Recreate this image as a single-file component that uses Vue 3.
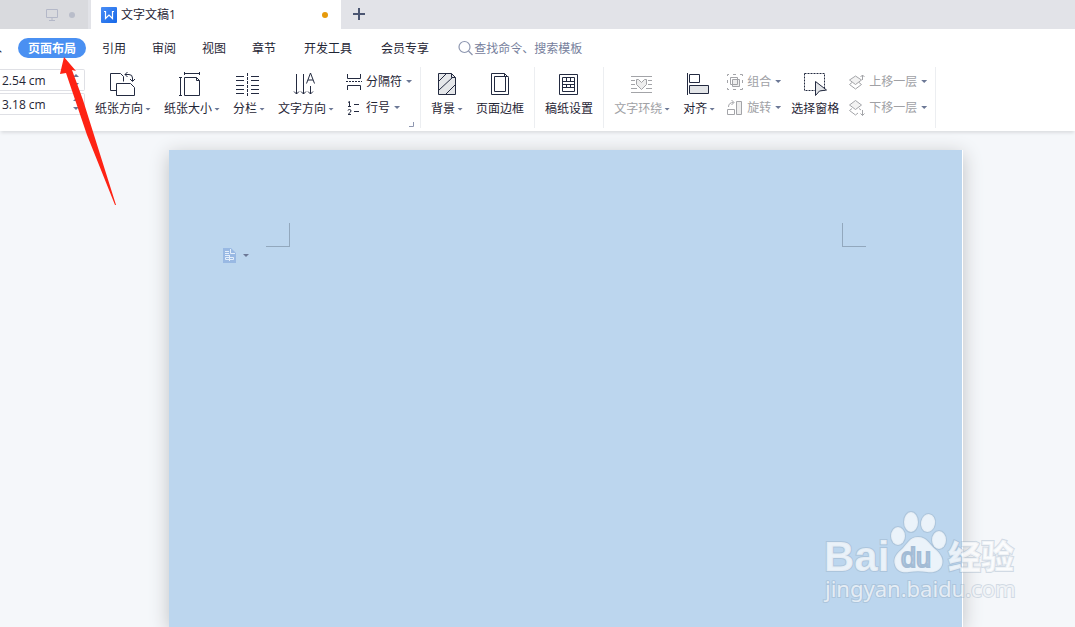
<script setup>
import { ref } from 'vue'

const topMargin = ref('2.54 cm')
const sideMargin = ref('3.18 cm')
const shortMenus = ['引用', '审阅', '视图', '章节']
const longMenus = ['开发工具', '会员专享']
</script>

<template>
  <div class="app">
    <header class="tabs">
      <button class="tab idle" aria-label="其他文档">
        <svg width="12" height="12" viewBox="0 0 12 12" fill="none" stroke="#b4b8c8"><path d="M.500.500h11v8H.500zM6 8.500V11M3 11.500h6" /></svg>
        <i class="dot grey"></i>
      </button>
      <button class="tab active">
        <svg width="16" height="16" viewBox="0 0 16 16"><defs><linearGradient id="brand" x2="1" y2="1"><stop stop-color="#4a8df5" /><stop offset="1" stop-color="#1668e8" /></linearGradient></defs><rect width="16" height="16" rx="1" fill="url(#brand)" /><path d="M3 4.500h1.500v7L8 8l3.500 3.500v-7H13" fill="none" stroke="#fff" stroke-width="1.200" /></svg>
        <span>文字文稿1</span>
        <i class="dot orange"></i>
      </button>
      <button class="add" aria-label="新建">
        <svg width="12" height="12" viewBox="0 0 12 12" stroke="#4b5672" stroke-width="2"><path d="M0 6h12M6 0v12" /></svg>
      </button>
    </header>

    <nav class="menu">
      <button class="clipped">插入</button>
      <button class="pill">页面布局</button>
      <button v-for="m in shortMenus" :key="m" class="item">{{ m }}</button>
      <button v-for="m in longMenus" :key="m" class="item wide">{{ m }}</button>
      <label class="search">
        <svg width="16" height="16" viewBox="0 0 16 16" fill="none" stroke="#8e97b0" stroke-width="1.200"><circle cx="6.500" cy="7" r="5.500" /><path d="M10.500 11l4 4" /></svg>
        <input type="text" placeholder="查找命令、搜索模板" aria-label="查找命令、搜索模板" />
      </label>
    </nav>

    <section class="ribbon">
      <div class="margins">
        <label class="spin"><input v-model="topMargin" type="text" aria-label="上边距" /><span class="steps"><i class="up"></i><i class="caret"></i></span></label>
        <label class="spin"><input v-model="sideMargin" type="text" aria-label="左边距" /><span class="steps"><i class="up"></i><i class="caret"></i></span></label>
      </div>

      <div class="group first">
        <button class="big">
          <svg width="28" height="26" viewBox="0 0 28 26" fill="none" stroke="#232a40"><path d="M7 19.500H1.500v-17h10l3 3v5" /><path d="M7.500 12.500h14l4 4v8h-18z" fill="#fff" /><path d="M16 3.500h4q3.500 0 3.500 3.500v3M18.500 1L16 3.500 18.500 6M21 8l2.500 2.500L26 8" /></svg>
          <span>纸张方向<i class="caret"></i></span>
        </button>
        <button class="big">
          <svg width="28" height="26" viewBox="0 0 28 26" fill="none" stroke="#232a40"><path d="M6.500 6.500h12l3 3v15h-15zM18.500 6.500v3h3" /><path d="M6.500 2.500h15M6.500 1v3M21.500 1v3M2.500 6.500v18M1 6.500h3M1 24.500h3" /></svg>
          <span>纸张大小<i class="caret"></i></span>
        </button>
        <button class="big">
          <svg width="28" height="26" viewBox="0 0 28 26" fill="none" stroke="#232a40"><path d="M1 5.500h8M1 9.500h8M1 14.500h8M1 18.500h8M1 22.500h8M16 5.500h8M16 9.500h8M16 14.500h8M16 18.500h8M16 22.500h8" /><path d="M12.500 2v23" stroke-dasharray="3 1" /></svg>
          <span>分栏<i class="caret"></i></span>
        </button>
        <button class="big">
          <svg width="28" height="26" viewBox="0 0 28 26" fill="none" stroke="#232a40"><path d="M4.500 3v20M2 20.500L4.500 23 7 20.500M11.500 3v20M9 20.500l2.500 2.500 2.500-2.500M18.500 15v8M16 20.500l2.500 2.500 2.500-2.500" /><path d="M14.500 12.500l4-10.500 4 10.500M16 9h5" /></svg>
          <span>文字方向<i class="caret"></i></span>
        </button>
        <div class="stack near">
          <button class="small">
            <svg width="16" height="16" viewBox="0 0 16 16" fill="none" stroke="#232a40"><path d="M1.500 0v4.500h13V0M1.500 16v-4.500h13V16" /><path d="M0 7.500h16" stroke-dasharray="2 1" /></svg>
            <span>分隔符</span><i class="caret"></i>
          </button>
          <button class="small">
            <svg width="16" height="16" viewBox="0 0 16 16" fill="none" stroke="#232a40"><path d="M2 2.500l1.500-1v5M2 6.500h3M2 10.500q0-1 1.500-1T5 11q0 1-3 3.500h3M8 4.500h5M8 11.500h5" /></svg>
            <span>行号</span><i class="caret"></i>
          </button>
        </div>
        <svg class="launcher" width="6" height="6" viewBox="0 0 6 6" fill="none" stroke="#8e97b0"><path d="M0 4.500h4.500V0" /></svg>
      </div>

      <div class="group roomy">
        <button class="big">
          <svg width="28" height="26" viewBox="0 0 28 26" fill="none" stroke="#232a40"><path d="M5.500 2.500h13l4 4v17h-17z" fill="#e5e7ea" /><path d="M18.500 2.500v4h4M6 10l7-7M6 19L20 6M13 23l9-9" /></svg>
          <span>背景<i class="caret"></i></span>
        </button>
        <button class="big">
          <svg width="28" height="26" viewBox="0 0 28 26" fill="none" stroke="#232a40"><path d="M5.500 2.500h13l4 4v17h-17z" /><path d="M8.500 5.500h11v15h-11zM18.500 2.500v3h4" /></svg>
          <span>页面边框</span>
        </button>
      </div>

      <div class="group roomy">
        <button class="big">
          <svg width="28" height="26" viewBox="0 0 28 26" fill="none" stroke="#232a40"><path d="M4.500 3.500h18v20h-18z" /><path d="M7.500 6.500h12v14h-12zM8 10.500h11M8 13.500h11M8 16.500h11M11.500 7v4M15.500 7v4M11.500 13v4M15.500 13v4" /></svg>
          <span>稿纸设置</span>
        </button>
      </div>

      <div class="group">
        <button class="big off" disabled>
          <svg width="28" height="26" viewBox="0 0 28 26" fill="none" stroke="#a3a4a8"><path d="M3 5.500h21M3 9.500h4M20 9.500h4M3 13.500h4M20 13.500h4M3 17.500h6M18 17.500h6M3 21.500h21" /><path d="M8.500 8.500h2l3 3 3-3h2v5l-5 5-5-5z" fill="#eee" /></svg>
          <span>文字环绕<i class="caret"></i></span>
        </button>
        <button class="big">
          <svg width="28" height="26" viewBox="0 0 28 26" fill="none" stroke="#232a40"><path d="M2.500 2v22M4.500 3.500h10v8h-10z" /><path d="M4.500 14.500h19v8h-19z" fill="#e3e5e8" /></svg>
          <span>对齐<i class="caret"></i></span>
        </button>
        <div class="stack near">
          <button class="small off" disabled>
            <svg width="16" height="16" viewBox="0 0 16 16" fill="none" stroke="#a3a4a8"><path d="M3.500 3.500h7v7h-7z" /><path d="M5.500 5.500h7v7h-7z" fill="#eee" /><path d="M5.500 10.500h5v-5" /><path d="M.500 2V.500H2M13 .500h2.500V2M.500 14v1.500H2M13 15.500h2.500V14M6 .500h3M6 15.500h3M.500 6v3M15.500 6v3" /></svg>
            <span>组合</span><i class="caret"></i>
          </button>
          <button class="small off" disabled>
            <svg width="16" height="16" viewBox="0 0 16 16" fill="none" stroke="#a3a4a8"><path d="M9.500 1.500h5v13h-5z" fill="#eee" /><path d="M7.500 9.500h-7v5h7zM1.500 7q0-4.500 5-4.500M4.500 0l2.500 2.500L4.500 5" /></svg>
            <span>旋转</span><i class="caret"></i>
          </button>
        </div>
        <button class="big tight">
          <svg width="28" height="26" viewBox="0 0 28 26" fill="none" stroke="#232a40"><path d="M3.500 2.500h20v17h-20z" stroke-dasharray="2 1" /><path d="M14.500 10.500v14l4-4.500 7-1z" fill="#e3e5e8" /></svg>
          <span>选择窗格</span>
        </button>
        <div class="stack tight">
          <button class="small off" disabled>
            <svg width="16" height="16" viewBox="0 0 16 16" fill="none" stroke="#a3a4a8"><path d="M.500 10.500l6 4.500 6-4.500-2.500-2M.500 10.500l2.500-2" /><path d="M.500 6l6-4 6 4-6 4.500z" fill="#f2f2f2" /><path d="M13.500 6V1M11.500 3l2-2 2 2" /></svg>
            <span>上移一层</span><i class="caret"></i>
          </button>
          <button class="small off" disabled>
            <svg width="16" height="16" viewBox="0 0 16 16" fill="none" stroke="#a3a4a8"><path d="M9 13l-2.500 2-6-4.500 2.500-2M10 8.500l2 1.500" /><path d="M.500 5l6-4.500 6 4.500-6 4.500z" fill="#f2f2f2" /><path d="M13.500 10v5.500M11.500 13.500l2 2 2-2" /></svg>
            <span>下移一层</span><i class="caret"></i>
          </button>
        </div>
      </div>
      <div class="group end"></div>
    </section>

    <main class="canvas">
      <article class="page">
        <div class="crops"><i class="crop left"></i><i class="crop right"></i></div>
        <button class="style-tag" aria-label="页面选项">
          <svg width="13" height="15" viewBox="0 0 13 15" fill="none" stroke="#e4effb"><path d="M0 0h8l5 5v10H0z" fill="#99b9e3" stroke="none" /><path d="M7.500 1v4.500H12M2 3.500h4M2 5.500h4M2 7.500h5M2.500 9.500h8v2h-8zM6.500 8v5" /></svg>
          <i class="caret"></i>
        </button>
      </article>
    </main>

    <svg class="pointer" width="60" height="150" viewBox="0 0 60 150"><path d="M8 0l12 14-4-1 11 30 11 35 22 70h-1L31 78 10 16l-6 1z" fill="#fe2314" /></svg>

    <svg class="watermark" width="200" height="96" viewBox="0 0 200 96">
      <g fill="#fff" fill-opacity=".7" stroke="#8fa5bb" stroke-opacity=".35" stroke-width="2" paint-order="stroke">
        <text class="logo" x="2" y="60">Bai</text>
        <ellipse cx="76" cy="25" rx="7" ry="9" />
        <ellipse cx="89" cy="11" rx="7" ry="10" />
        <ellipse cx="106" cy="12" rx="7" ry="9" transform="rotate(10 106 12)" />
        <ellipse cx="117" cy="29" rx="7" ry="9" />
        <path d="M96 26C87 26 85 34 79 39c-5 4-8 9-6 15 2 7 9 8 14 7 6-1 12-1 18 0 7 1 13-1 15-7s-2-12-7-16c-6-5-8-12-17-12z" />
        <text class="hanzi" x="126" y="58">经验</text>
        <text class="url" x="3" y="86">jingyan.baidu.com</text>
      </g>
      <text class="du" x="79" y="56">du</text>
    </svg>
  </div>
</template>

<style>
body {
  margin: 0;
}
</style>

<style scoped>
.app {
  position: relative;
  display: flex;
  flex-direction: column;
  min-height: 100vh;
  overflow: hidden;
  background: #f5f7fa;
  color: #1f2535;
  font: 12px/16px "Open Sans", "Noto Sans CJK SC", sans-serif;
}
button,
input {
  margin: 0;
  padding: 0;
  border: 0;
  background: none;
  color: inherit;
  font: inherit;
  white-space: nowrap;
}
svg {
  flex: none;
  display: block;
}
.tabs {
  display: flex;
  height: 29px;
  background: #e2e3e8;
}
.tab {
  display: flex;
  align-items: center;
}
.idle {
  width: 88px;
  margin-right: 3px;
  padding-left: 46px;
  gap: 11px;
  background: #d9dade;
}
.active {
  width: 250px;
  padding: 0 13px 0 10px;
  gap: 4px;
  background: #fff;
}
.dot {
  width: 6px;
  height: 6px;
  border-radius: 50%;
}
.grey {
  background: #b9bdca;
}
.orange {
  margin-left: auto;
  background: #e69a0b;
}
.add {
  padding: 0 12px 2px;
}
.menu {
  display: flex;
  align-items: center;
  height: 38px;
  background: #fff;
}
.clipped {
  margin: 0 16px 0 -22px;
}
.pill {
  height: 20px;
  margin-right: 3px;
  padding: 1px 10px 0;
  border-radius: 10px;
  background: #4a90f2;
  color: #fff;
  font-weight: 700;
}
.item {
  padding: 2px 13px 0;
}
.wide {
  padding: 2px 14px 0 15px;
}
.search {
  display: flex;
  flex: 1;
  align-items: center;
  margin-left: 15px;
}
.search input {
  flex: 1;
  padding-top: 1px;
}
.search input::placeholder {
  color: #76809c;
  opacity: 1;
}
.ribbon {
  position: relative;
  z-index: 1;
  display: flex;
  height: 64px;
  background: #fff;
  box-shadow: 0 3px 3px -1px #dcdee1;
}
.margins {
  width: 85px;
  padding-top: 2px;
}
.spin {
  display: flex;
  box-sizing: border-box;
  height: 22px;
  margin-bottom: 2px;
  border: 1px solid #dfe0e5;
  border-left: 0;
  border-radius: 0 2px 2px 0;
}
.spin input {
  width: 73px;
  padding: 1px 0 0 2px;
  box-sizing: border-box;
}
.steps {
  display: flex;
  flex-direction: column;
  justify-content: center;
  gap: 6px;
}
.up,
.caret {
  display: inline-block;
  width: 6px;
  height: 3px;
  background: #6c7896;
  clip-path: polygon(0 0, 100% 0, 50% 100%);
}
.up {
  clip-path: polygon(50% 0, 100% 100%, 0 100%);
}
.group {
  position: relative;
  display: flex;
  gap: 13px;
  height: 61px;
  padding: 0 8px 0 10px;
  border-left: 1px solid #eceef1;
}
.first {
  border-left: 0;
}
.roomy {
  padding-right: 10px;
}
.end {
  padding: 0;
}
.big {
  display: flex;
  flex-direction: column;
  align-items: center;
  padding-top: 4px;
  gap: 4px;
}
.big span {
  display: flex;
  align-items: center;
  gap: 2px;
}
.stack {
  display: flex;
  flex-direction: column;
  align-items: flex-start;
  padding-top: 6px;
  gap: 9px;
}
.small {
  display: flex;
  align-items: center;
  gap: 4px;
}
.small span {
  padding-top: 1px;
}
.near {
  margin-left: -1px;
}
.tight {
  margin-left: -3px;
}
.off {
  color: #a0a1a5;
}
.launcher {
  position: absolute;
  right: 5px;
  bottom: 0;
}
.canvas {
  display: flex;
  flex: 1;
  padding: 19px 112px 0 169px;
}
.page {
  flex: 1;
  padding: 73px 96px 0 54px;
  border-right: 1px solid #fff;
  background: #bcd6ee;
  box-shadow: 0 4px 18px #bfc1c3;
}
.crops {
  display: flex;
  justify-content: space-between;
  margin-left: 43px;
}
.crop {
  width: 23px;
  height: 23px;
  border-bottom: 1px solid #92a8bd;
}
.left {
  border-right: 1px solid #92a8bd;
}
.right {
  border-left: 1px solid #92a8bd;
}
.style-tag {
  display: flex;
  align-items: center;
  gap: 7px;
  margin-top: 1px;
}
.pointer {
  position: absolute;
  z-index: 2;
  top: 57px;
  left: 56px;
}
.watermark {
  position: absolute;
  right: 53px;
  bottom: 20px;
}
.logo {
  font: 700 42px "Liberation Sans", sans-serif;
}
.hanzi {
  font: 900 33px "Noto Sans CJK SC", sans-serif;
}
.url {
  font: 22px/22px "Noto Sans", sans-serif;
}
.du {
  fill: #d3e3f2;
  stroke: #a3bcd5;
  stroke-width: 2px;
  font: 27px "Liberation Sans", sans-serif;
}
</style>
